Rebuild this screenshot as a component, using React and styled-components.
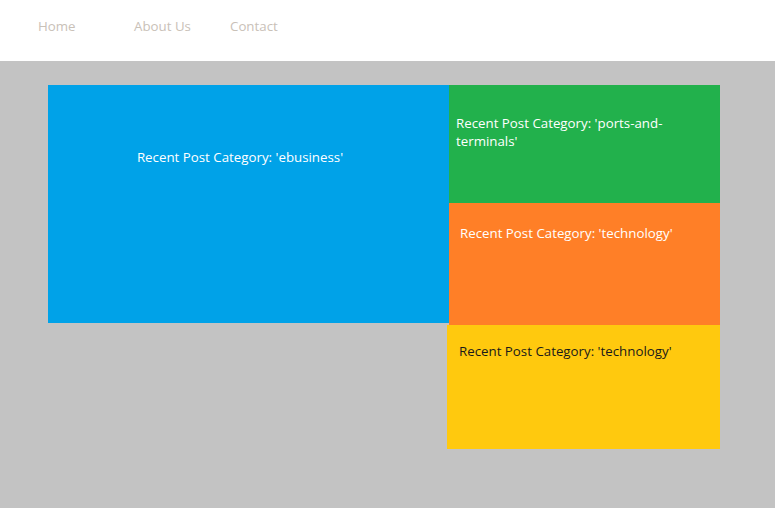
import React from "react";
import styled, { createGlobalStyle } from "styled-components";

const GlobalStyle = createGlobalStyle`
  html, body {
    margin: 0;
    padding: 0;
    background: #c3c3c3;
    font-family: "Open Sans", "Noto Sans", sans-serif;
  }
`;

const posts = [
  { category: "ports-and-terminals", color: "#22b14c", text: "#ffffff", pad: "29px 18px 0 7px", height: 118, shift: 0 },
  { category: "technology", color: "#ff7f27", text: "#ffffff", pad: "21px 18px 0 11px", height: 122, shift: 0 },
  { category: "technology", color: "#ffc90e", text: "#1a1a1a", pad: "17px 18px 0 12px", height: 124, shift: 2 },
];

const App = () => {
  return (
    <>
      <GlobalStyle />
      <StyledHeader>
        <StyledNav>
          <a href="#">Home</a>
          <a href="#">About Us</a>
          <a href="#">Contact</a>
        </StyledNav>
      </StyledHeader>
      <StyledMain>
        <StyledFeature>Recent Post Category: 'ebusiness'</StyledFeature>
        <StyledColumn>
          {posts.map((p, i) => (
            <StyledTile
              key={i}
              $bg={p.color}
              $fg={p.text}
              $pad={p.pad}
              $h={p.height}
              $shift={p.shift}
            >
              Recent Post Category: '{p.category}'
            </StyledTile>
          ))}
        </StyledColumn>
      </StyledMain>
    </>
  );
};

export default App;

const StyledHeader = styled.header`
  background: #ffffff;
  height: 61px;
  display: flex;
  align-items: center;
`;
const StyledNav = styled.nav`
  display: grid;
  grid-template-columns: 96px 96px 96px;
  padding: 0 0 10px 38px;
  a {
    color: #c9c1b8;
    font-size: 13.3px;
    text-decoration: none;
  }
`;
const StyledMain = styled.main`
  display: grid;
  grid-template-columns: 401px 271px;
  align-items: start;
  padding: 24px 56px 59px 48px;
  height: 364px;
`;
const StyledFeature = styled.div`
  background: #00a2e8;
  height: 238px;
  box-sizing: border-box;
  padding: 63px 17px 0 0;
  text-align: center;
  color: #ffffff;
  font-size: 13.3px;
  line-height: 18px;
`;
const StyledColumn = styled.div`
  display: flex;
  flex-direction: column;
`;
const StyledTile = styled.div`
  background: ${(p) => p.$bg};
  color: ${(p) => p.$fg};
  height: ${(p) => p.$h}px;
  padding: ${(p) => p.$pad};
  margin-left: -${(p) => p.$shift}px;
  box-sizing: border-box;
  font-size: 13.3px;
  line-height: 18px;
`;
